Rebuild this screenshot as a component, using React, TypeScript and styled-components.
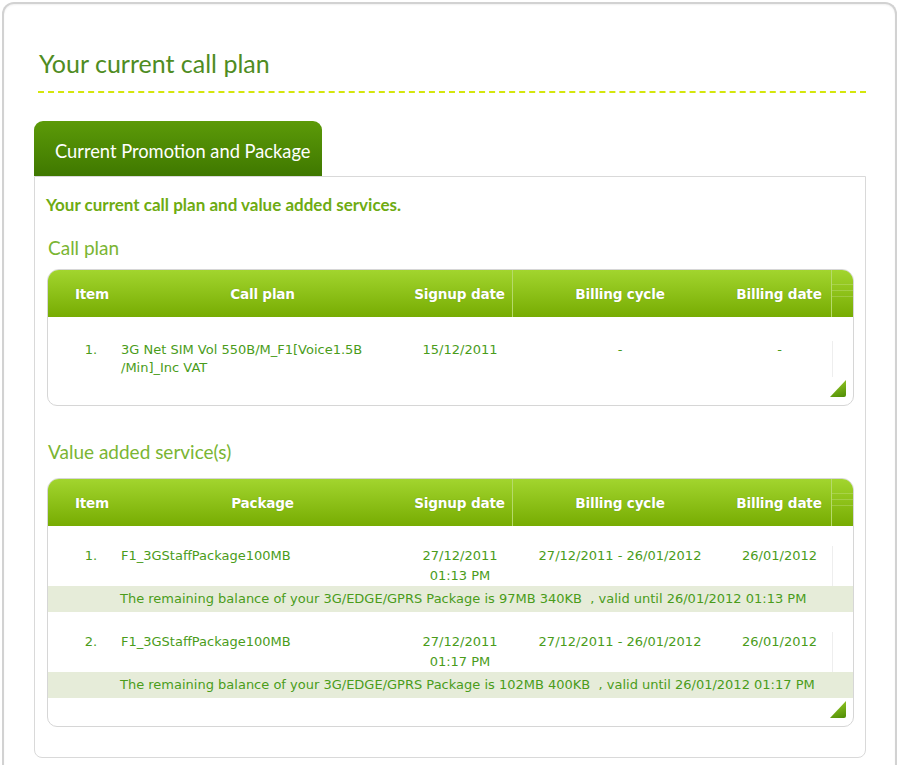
import styled, { createGlobalStyle } from "styled-components";

const GlobalStyle = createGlobalStyle`
  html, body {
    margin: 0;
    padding: 0;
    background: #ffffff;
  }
  body {
    font-family: "DejaVu Sans", Verdana, sans-serif;
  }
`;

interface Column {
  title: string;
  width: string;
  divider?: boolean;
}

interface ServiceRow {
  no: string;
  name: string[];
  signup: string[];
  cycle: string;
  billing: string;
  balance?: string;
}

const planColumns: Column[] = [
  { title: "Item", width: "70px" },
  { title: "Call plan", width: "289px" },
  { title: "Signup date", width: "106px", divider: true },
  { title: "Billing cycle", width: "214px" },
  { title: "Billing date", width: "105px", divider: true },
];

const serviceColumns: Column[] = [
  { title: "Item", width: "70px" },
  { title: "Package", width: "289px" },
  { title: "Signup date", width: "106px", divider: true },
  { title: "Billing cycle", width: "214px" },
  { title: "Billing date", width: "105px", divider: true },
];

const planRows: ServiceRow[] = [
  {
    no: "1.",
    name: ["3G Net SIM Vol 550B/M_F1[Voice1.5B", "/Min]_Inc VAT"],
    signup: ["15/12/2011"],
    cycle: "-",
    billing: "-",
  },
];

const serviceRows: ServiceRow[] = [
  {
    no: "1.",
    name: ["F1_3GStaffPackage100MB"],
    signup: ["27/12/2011", "01:13 PM"],
    cycle: "27/12/2011 - 26/01/2012",
    billing: "26/01/2012",
    balance:
      "The remaining balance of your 3G/EDGE/GPRS Package is 97MB 340KB\u00a0 , valid until 26/01/2012 01:13 PM",
  },
  {
    no: "2.",
    name: ["F1_3GStaffPackage100MB"],
    signup: ["27/12/2011", "01:17 PM"],
    cycle: "27/12/2011 - 26/01/2012",
    billing: "26/01/2012",
    balance:
      "The remaining balance of your 3G/EDGE/GPRS Package is 102MB 400KB\u00a0 , valid until 26/01/2012 01:17 PM",
  },
];

const gridTemplate = (cols: Column[]) =>
  cols.map((c) => c.width).join(" ") + " 1fr";

function DataTable({
  columns,
  rows,
  rowTop,
  lineHeight,
  footTop,
}: {
  columns: Column[];
  rows: ServiceRow[];
  rowTop: number;
  lineHeight: number;
  footTop: number;
}) {
  const template = gridTemplate(columns);
  return (
    <TableBox>
      <HeadRow $template={template}>
        {columns.map((c, i) => (
          <HeadCell key={c.title} $divider={!!c.divider} $first={i === 0}>
            {c.title}
          </HeadCell>
        ))}
        <HeadTail />
      </HeadRow>
      {rows.map((r) => (
        <div key={r.no}>
          <BodyRow $template={template} $top={rowTop} $lh={lineHeight}>
            <ItemCell>{r.no}</ItemCell>
            <NameCell>
              {r.name.map((line) => (
                <div key={line}>{line}</div>
              ))}
            </NameCell>
            <CenterCell>
              {r.signup.map((line) => (
                <div key={line}>{line}</div>
              ))}
            </CenterCell>
            <CenterCell>{r.cycle}</CenterCell>
            <CenterCell>{r.billing}</CenterCell>
            <TailCell />
          </BodyRow>
          {r.balance && <BalanceBand>{r.balance}</BalanceBand>}
        </div>
      ))}
      <TableFoot $top={footTop}>
        <Corner />
      </TableFoot>
    </TableBox>
  );
}

export default function App() {
  return (
    <>
      <GlobalStyle />
      <Frame>
        <PageTitle>Your current call plan</PageTitle>
        <Tabs>
          <Tab>Current Promotion and Package</Tab>
        </Tabs>
        <Panel>
          <Intro>Your current call plan and value added services.</Intro>
          <SectionTitle>Call plan</SectionTitle>
          <DataTable
            columns={planColumns}
            rows={planRows}
            rowTop={24}
            lineHeight={18}
            footTop={3}
          />
          <SectionTitle $gap={35} $after={15}>
            Value added service(s)
          </SectionTitle>
          <DataTable
            columns={serviceColumns}
            rows={serviceRows}
            rowTop={20}
            lineHeight={20}
            footTop={3}
          />
        </Panel>
      </Frame>
    </>
  );
}

const Frame = styled.div`
  margin: 2px 3px 0 2px;
  min-height: 800px;
  border: 2px solid #d2d2d2;
  border-bottom: none;
  border-radius: 12px 12px 0 0;
  box-shadow: inset 0 1px 2px rgba(0, 0, 0, 0.06);
  padding: 43px 29px 0 30px;
  background: #ffffff;
`;

const PageTitle = styled.h1`
  margin: 0 0 0 4px;
  padding: 0 0 12px 1px;
  font-family: "Lato", "Open Sans", sans-serif;
  font-weight: 400;
  font-size: 25px;
  line-height: 32px;
  color: #4f8c22;
  border-bottom: 2px dashed #d4e60c;
`;

const Tabs = styled.div`
  display: flex;
  margin-top: 28px;
`;

const Tab = styled.div`
  width: 288px;
  height: 55px;
  box-sizing: border-box;
  padding: 19px 0 0 21px;
  border-radius: 9px 9px 0 0;
  background: linear-gradient(#5c9a08, #3f7800);
  color: #ffffff;
  font-family: "Lato", "Open Sans", sans-serif;
  font-size: 18.3px;
  line-height: 22px;
`;

const Panel = styled.div`
  border: 1px solid #d9d9d9;
  border-radius: 0 0 8px 8px;
  padding: 17px 11px 30px 11px;
`;

const Intro = styled.div`
  font-family: "Lato", "Open Sans", sans-serif;
  font-weight: 700;
  font-size: 17px;
  line-height: 22px;
  color: #6eab12;
  margin-bottom: 21px;
`;

const SectionTitle = styled.h2<{ $gap?: number; $after?: number }>`
  margin: ${(p) => p.$gap ?? 0}px 0 ${(p) => p.$after ?? 10}px 2px;
  font-family: "Lato", "Open Sans", sans-serif;
  font-weight: 400;
  font-size: 19px;
  line-height: 22px;
  color: #7ab532;
`;

const TableBox = styled.div`
  margin-left: 1px;
  border: 1px solid #d6d6d6;
  border-radius: 12px 12px 10px 10px;
  overflow: hidden;
  background: #ffffff;
`;

const HeadRow = styled.div<{ $template: string }>`
  display: grid;
  grid-template-columns: ${(p) => p.$template};
  height: 47px;
  background: linear-gradient(#a2d52e, #77ac02);
`;

const HeadCell = styled.div<{ $divider: boolean; $first: boolean }>`
  display: flex;
  align-items: center;
  justify-content: center;
  padding-left: ${(p) => (p.$first ? "18px" : "0")};
  border-right: ${(p) => (p.$divider ? "1px solid #b6da6a" : "none")};
  color: #ffffff;
  font-family: "DejaVu Sans", Verdana, sans-serif;
  font-weight: 700;
  font-size: 13.6px;
  letter-spacing: -0.2px;
  text-shadow: 0 0 1px rgba(80, 120, 0, 0.5);
`;

const HeadTail = styled.div`
  background:
    linear-gradient(rgba(255, 255, 255, 0.18), rgba(255, 255, 255, 0.18)) 0 14px / 100% 1px no-repeat,
    linear-gradient(rgba(255, 255, 255, 0.18), rgba(255, 255, 255, 0.18)) 0 20px / 100% 1px no-repeat,
    linear-gradient(rgba(255, 255, 255, 0.18), rgba(255, 255, 255, 0.18)) 0 26px / 100% 1px no-repeat;
`;

const BodyRow = styled.div<{ $template: string; $top: number; $lh: number }>`
  display: grid;
  grid-template-columns: ${(p) => p.$template};
  padding-top: ${(p) => p.$top}px;
  font-family: "DejaVu Sans", Verdana, sans-serif;
  font-size: 13px;
  line-height: ${(p) => p.$lh}px;
  color: #4a9c1a;
`;

const ItemCell = styled.div`
  text-align: center;
  padding-left: 16px;
`;

const NameCell = styled.div`
  padding-left: 3px;
`;

const CenterCell = styled.div`
  text-align: center;
`;

const TailCell = styled.div`
  border-left: 1px solid #eeeeee;
`;

const BalanceBand = styled.div`
  height: 26px;
  line-height: 26px;
  padding-left: 72px;
  background: #e6ecd9;
  font-family: "DejaVu Sans", Verdana, sans-serif;
  font-size: 13px;
  color: #4a9c1a;
  white-space: nowrap;
`;

const TableFoot = styled.div<{ $top: number }>`
  display: flex;
  justify-content: flex-end;
  padding: ${(p) => p.$top}px 7px 8px 0;
`;

const Corner = styled.div`
  width: 16px;
  height: 17px;
  background: linear-gradient(160deg, #9fd22a, #4e8c05);
  clip-path: polygon(100% 0, 100% 100%, 0 100%);
  border-radius: 0 0 2px 0;
`;
